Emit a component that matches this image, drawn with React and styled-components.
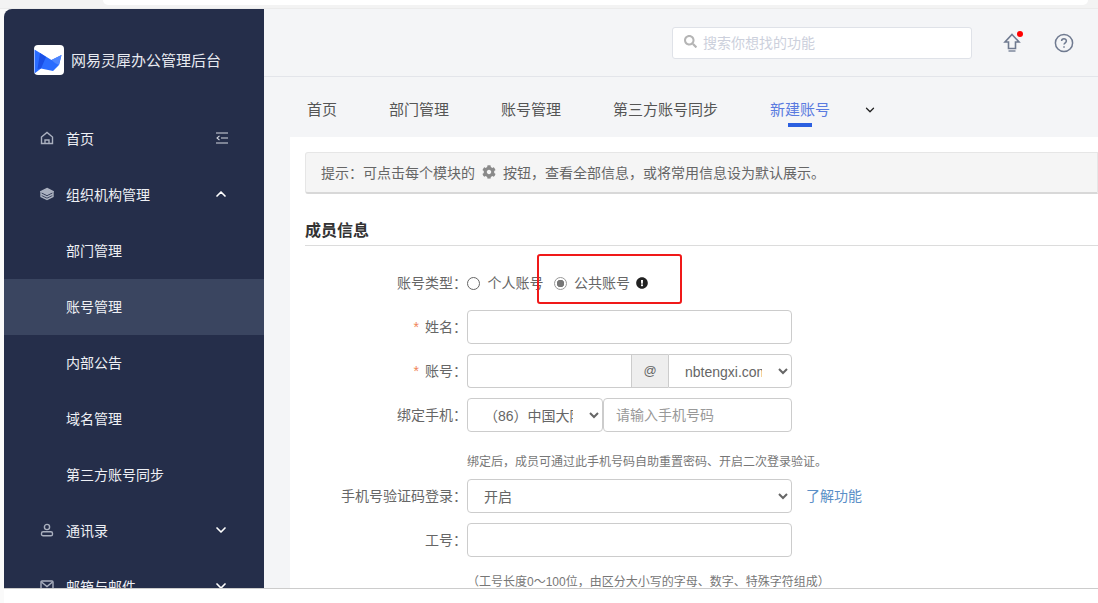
import React from 'react'
import styled, { createGlobalStyle } from 'styled-components'
import { FaCog, FaSearch, FaExclamationCircle } from 'react-icons/fa'
import { ChevronDown, ChevronUp } from 'lucide-react'

const Global = createGlobalStyle`
  html, body { margin: 0; padding: 0; height: 603px; overflow: hidden; background: #f4f5f7; }
  * { box-sizing: border-box; }
  body { font-family: "Liberation Sans", "Noto Sans CJK SC", sans-serif; }
`

const HomeIcon = () => (
  <svg width="14" height="14" viewBox="0 0 14 14" fill="none" stroke="#aab0bf" strokeWidth="1.4">
    <path d="M1.5 6 7 1.5 12.5 6v6.5h-11z" />
    <path d="M5 12.5V9h4v3.5" />
  </svg>
)
const LayersIcon = () => (
  <svg width="14" height="14" viewBox="0 0 14 14" fill="none" stroke="#aab0bf" strokeWidth="1.4">
    <path d="M7 1.5 13 4.5 7 7.5 1 4.5z" fill="#aab0bf" />
    <path d="M1 4.5v5l6 3 6-3v-5M1 7l6 3 6-3" />
  </svg>
)
const UserIcon = () => (
  <svg width="14" height="14" viewBox="0 0 14 14" fill="none" stroke="#aab0bf" strokeWidth="1.4">
    <circle cx="7" cy="4" r="2.6" />
    <rect x="1.5" y="8.8" width="11" height="4" rx="1.6" />
  </svg>
)
const MailIcon = () => (
  <svg width="14" height="14" viewBox="0 0 14 14" fill="none" stroke="#aab0bf" strokeWidth="1.4">
    <rect x="1" y="2" width="12" height="10" rx="1" />
    <path d="M1.5 3 7 7.5 12.5 3" />
  </svg>
)
const CollapseIcon = () => (
  <svg width="14" height="14" viewBox="0 0 14 14" fill="none" stroke="#d5d8e0" strokeWidth="1.1">
    <path d="M1 2h12M1 12h12M6 7h7M4.5 4.8 2 7l2.5 2.2" />
  </svg>
)
const Logo = () => (
  <svg width="30" height="30" viewBox="0 0 30 30">
    <rect width="30" height="30" rx="4" fill="#fff" />
    <path d="M0.5 4.5 17.5 15 27.5 10 25 20 19 26 7 23.5 0.5 28.5z" fill="#2a6cff" />
    <path d="M7 23.5 3.5 24 6 8 12 12z" fill="#1a4fe6" />
    <path d="M17.5 15 27.5 10 25 20 21 18z" fill="#4f86ff" />
  </svg>
)
const UpgradeIcon = () => (
  <svg width="18" height="21" viewBox="0 0 18 21" fill="none" stroke="#6f7a90" strokeWidth="1.6">
    <path d="M9 2.5 16 10h-3.5v6.5h-7V10H2z" />
    <path d="M5.5 19h7" strokeWidth="2" stroke="#9ba3b3" />
  </svg>
)
const HelpIcon = () => (
  <svg width="20" height="20" viewBox="0 0 20 20" fill="none" stroke="#6f7a90" strokeWidth="1.5">
    <circle cx="10" cy="10" r="8.6" />
    <path d="M7.6 8c0-3 4.8-3 4.8 0 0 1.8-2.4 1.8-2.4 3.6" />
    <path d="M10 13.2v1.6" />
  </svg>
)

const menu = [
  { label: '首页', icon: <HomeIcon />, right: <CollapseIcon /> },
  { label: '组织机构管理', icon: <LayersIcon />, right: <ChevronUp size={16} strokeWidth={2.5} color="#fff" /> },
  { label: '部门管理', sub: true },
  { label: '账号管理', sub: true, active: true },
  { label: '内部公告', sub: true },
  { label: '域名管理', sub: true },
  { label: '第三方账号同步', sub: true },
  { label: '通讯录', icon: <UserIcon />, right: <ChevronDown size={16} strokeWidth={2.5} color="#fff" /> },
  { label: '邮箱与邮件', icon: <MailIcon />, right: <ChevronDown size={16} strokeWidth={2.5} color="#fff" /> },
]

const tabs = ['首页', '部门管理', '账号管理', '第三方账号同步', '新建账号']

const App = () => {
  return (
    <Page>
      <Global />
      <TopStrip><BrowserEdge /></TopStrip>
      <Shell>
        <Sidebar>
          <Brand>
            <Logo />
            <BrandName>网易灵犀办公管理后台</BrandName>
          </Brand>
          {menu.map((m) => (
            <MenuItem key={m.label} $active={m.active}>
              <MenuIcon>{m.icon}</MenuIcon>
              <MenuLabel>{m.label}</MenuLabel>
              {m.right}
            </MenuItem>
          ))}
        </Sidebar>
        <Main>
          <Header>
            <SearchBox>
              <FaSearch size={13} color="#b5b5b5" />
              <span>搜索你想找的功能</span>
            </SearchBox>
            <Upgrade>
              <UpgradeIcon />
              <RedDot />
            </Upgrade>
            <HelpIcon />
          </Header>
          <Tabs>
            {tabs.map((t, i) => (
              <Tab key={t} $active={i === 4}>{t}</Tab>
            ))}
            <TabMore><ChevronDown size={14} strokeWidth={2.2} color="#222" /></TabMore>
          </Tabs>
          <Content>
            <Tip>
              提示：可点击每个模块的
              <FaCog size={14} color="#8a8a8a" />
              <span>按钮，查看全部信息，或将常用信息设为默认展示。</span>
            </Tip>
            <SectionTitle>成员信息</SectionTitle>
            <TypeRow>
              <Label>账号类型：</Label>
              <Radio />
              <RadioText>个人账号</RadioText>
              <Radio $on />
              <RadioText>公共账号</RadioText>
              <InfoIcon size={12} color="#222" />
              <Highlight />
            </TypeRow>
            <Row>
              <Label><Star>*</Star>姓名：</Label>
              <TextBox />
            </Row>
            <Row>
              <Label><Star>*</Star>账号：</Label>
              <Group>
                <GroupInput />
                <At>@</At>
                <Select $w={124} $joined defaultValue="n">
                  <option value="n">nbtengxi.com</option>
                </Select>
              </Group>
            </Row>
            <Row>
              <Label>绑定手机：</Label>
              <Select $w={136} defaultValue="86">
                <option value="86">（86）中国大陆</option>
              </Select>
              <TextBox $w={189} placeholder="请输入手机号码" />
            </Row>
            <Hint>绑定后，成员可通过此手机号码自助重置密码、开启二次登录验证。</Hint>
            <Row>
              <Label>手机号验证码登录：</Label>
              <Select $w={325} defaultValue="on">
                <option value="on">开启</option>
              </Select>
              <LearnMore>了解功能</LearnMore>
            </Row>
            <Row>
              <Label>工号：</Label>
              <TextBox />
            </Row>
            <Hint $tight>（工号长度0～100位，由区分大小写的字母、数字、特殊字符组成）</Hint>
          </Content>
        </Main>
      </Shell>
      <BottomBar />
    </Page>
  )
}

export default App

const Page = styled.div`
  width: 1098px;
  height: 603px;
  display: flex;
  flex-direction: column;
  overflow: hidden;
  background: #fafafa;
`
const TopStrip = styled.div`
  height: 9px;
  flex: none;
  background: #f3f3f3;
  border-bottom: 1px solid #ebebeb;
  overflow: hidden;
`
const BrowserEdge = styled.div`
  width: 985px;
  height: 5px;
  margin-left: 103px;
  background: #ffffff;
  border-radius: 0 0 8px 8px;
`
const Shell = styled.div`
  flex: 1;
  min-height: 0;
  display: flex;
  padding-left: 4px;
  background: #fafafa;
`
const Sidebar = styled.div`
  width: 260px;
  flex: none;
  background: #252e4a;
  border-top-left-radius: 8px;
  overflow: hidden;
  color: #fff;
`
const Brand = styled.div`
  height: 102px;
  padding-left: 30px;
  display: flex;
  align-items: center;
  gap: 7px;
`
const BrandName = styled.div`
  padding-bottom: 2px;
  font-size: 15px;
  color: #e8eaf0;
`
const MenuItem = styled.div`
  height: 56px;
  flex: none;
  display: flex;
  align-items: center;
  padding: 0 35px 2px 36px;
  background: ${(p) => (p.$active ? '#3a4560' : 'transparent')};
`
const MenuIcon = styled.div`
  width: 26px;
  display: flex;
  align-items: center;
`
const MenuLabel = styled.div`
  flex: 1;
  font-size: 14px;
  color: #eef0f5;
`
const Main = styled.div`
  flex: 1;
  min-width: 0;
  background: #f4f5f7;
  display: flex;
  flex-direction: column;
`
const Header = styled.div`
  height: 68px;
  flex: none;
  display: flex;
  align-items: center;
  justify-content: flex-end;
  padding: 0 24px 0 0;
  border-bottom: 1px solid #e3e5ea;
`
const SearchBox = styled.div`
  width: 300px;
  height: 32px;
  background: #fff;
  border: 1px solid #dfe2e8;
  border-radius: 3px;
  display: flex;
  align-items: center;
  gap: 6px;
  padding: 0 11px 2px;
  font-size: 14px;
  color: #ccd0dc;
  margin-right: 31px;
`
const Upgrade = styled.div`
  position: relative;
  width: 18px;
  height: 21px;
  margin-right: 33px;
`
const RedDot = styled.div`
  position: absolute;
  top: -1px;
  right: -2px;
  width: 6px;
  height: 6px;
  border-radius: 50%;
  background: #f00;
`
const Tabs = styled.div`
  height: 60px;
  flex: none;
  display: flex;
  align-items: center;
  padding: 6px 0 0 43px;
  gap: 52px;
`
const Tab = styled.div`
  position: relative;
  font-size: 15px;
  line-height: 20px;
  color: ${(p) => (p.$active ? '#5a7be0' : '#555')};
  &::after {
    content: '';
    display: ${(p) => (p.$active ? 'block' : 'none')};
    position: absolute;
    left: 18px;
    bottom: -7px;
    width: 24px;
    height: 4px;
    background: #2b5fe0;
  }
`
const TabMore = styled.div`
  margin-left: -19px;
  display: flex;
`
const Content = styled.div`
  flex: 1;
  min-height: 0;
  margin-left: 26px;
  padding: 15px 0 0 15px;
  background: #fff;
  overflow: hidden;
`
const Tip = styled.div`
  height: 42px;
  display: flex;
  align-items: center;
  padding: 0 0 2px 15px;
  font-size: 14px;
  color: #666;
  background: #f5f5f5;
  border: 1px solid #e6e6e6;
  border-bottom: 2px solid #d8d8d8;
  border-radius: 3px 0 0 3px;
  white-space: nowrap;
  svg { margin: 0 7px; }
`
const SectionTitle = styled.div`
  margin-top: 23px;
  height: 29px;
  font-size: 16px;
  font-weight: 700;
  color: #333;
  border-bottom: 1px solid #dcdcdc;
  line-height: 27px;
`
const Row = styled.div`
  display: flex;
  align-items: center;
  min-height: 34px;
  margin-top: 10px;
  font-size: 14px;
  color: #666;
`
const TypeRow = styled(Row)`
  position: relative;
  min-height: 28px;
  margin: 23px 0 13px;
`
const Label = styled.div`
  width: 162px;
  flex: none;
  padding-bottom: 2px;
  text-align: right;
  font-size: 14px;
  color: #666;
  white-space: nowrap;
`
const Star = styled.span`
  color: #f0855a;
  margin-right: 6px;
`
const Radio = styled.span`
  width: 13px;
  height: 13px;
  flex: none;
  border-radius: 50%;
  border: 1px solid ${(p) => (p.$on ? '#999' : '#666')};
  background: ${(p) => (p.$on ? 'radial-gradient(circle, #777 0 3.5px, #fff 4px)' : '#fff')};
`
const RadioText = styled.span`
  margin: 0 10px 0 7.5px;
  padding-bottom: 2px;
  font-size: 14px;
  color: #666;
`
const InfoIcon = styled(FaExclamationCircle)`
  margin-left: -4px;
`
const Highlight = styled.div`
  position: absolute;
  left: 232px;
  top: -15px;
  width: 145px;
  height: 50px;
  border: 2px solid #f01919;
  border-radius: 3px;
  pointer-events: none;
`
const TextBox = styled.input`
  width: ${(p) => p.$w || 325}px;
  height: 34px;
  padding: 0 12px;
  border: 1px solid #ccc;
  border-radius: 4px;
  font-size: 14px;
  font-family: "Liberation Sans", "Noto Sans CJK SC", sans-serif;
  background: #fff;
  outline: none;
  &::placeholder { color: #999; }
`
const Group = styled.div`
  display: flex;
  width: 325px;
  height: 34px;
`
const GroupInput = styled.input`
  width: 164px;
  height: 34px;
  border: 1px solid #ccc;
  border-right: 0;
  border-radius: 4px 0 0 4px;
  outline: none;
`
const At = styled.div`
  width: 37px;
  flex: none;
  display: flex;
  align-items: center;
  justify-content: center;
  background: #eee;
  border: 1px solid #ccc;
  border-right: 0;
  padding-bottom: 2px;
  font-size: 13px;
  color: #666;
`
const Select = styled.select`
  width: ${(p) => p.$w}px;
  height: 34px;
  flex: none;
  padding: 2px 13px 0 12px;
  border: 1px solid #ccc;
  border-radius: ${(p) => (p.$joined ? '0 4px 4px 0' : '4px')};
  background: #fff;
  color: #666;
  font-size: 14px;
  font-family: "Liberation Sans", "Noto Sans CJK SC", sans-serif;
  outline: none;
`
const Hint = styled.div`
  margin: ${(p) => (p.$tight ? '18px' : '23px')} 0 0 162px;
  height: 14px;
  font-size: 12px;
  line-height: 14px;
  color: #777;
  white-space: nowrap;
`
const LearnMore = styled.a`
  margin-left: 14px;
  padding-bottom: 2px;
  font-size: 14px;
  color: #5b8fc7;
`
const BottomBar = styled.div`
  height: 15px;
  flex: none;
  margin-left: 4px;
  background: #fff;
  border-top: 1px solid #ccc;
`
